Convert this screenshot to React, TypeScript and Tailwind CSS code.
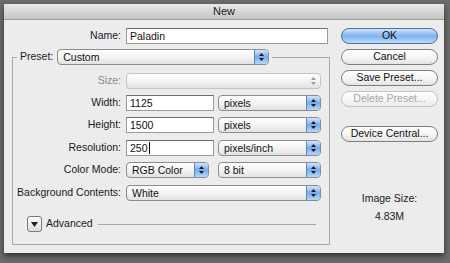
import React from "react";

const font = "font-['Lucida_Grande','Liberation_Sans',sans-serif]";

function Arrows({ dim }: { dim?: boolean }) {
  const c = dim ? "#9a9a9a" : "#1a1a1a";
  return (
    <svg width="7" height="10" viewBox="0 0 7 10">
      <path d="M3.5 1 L6 4 L1 4 Z" fill={c} />
      <path d="M3.5 9 L6 6 L1 6 Z" fill={c} />
    </svg>
  );
}

function Select({ value, w, disabled }: { value?: string; w: string; disabled?: boolean }) {
  return (
    <div
      className={`flex h-[16px] ${w} overflow-hidden rounded-[4px] border ${
        disabled ? "border-[#c4c4c4]" : "border-[#8c8c8c]"
      } bg-linear-to-b from-white via-[#f4f4f4] to-[#e2e2e2]`}
    >
      <div className="flex-1 truncate pl-[5px] leading-[14px] text-[#111]">{value}</div>
      {disabled ? (
        <div className="flex w-[14px] items-center justify-center">
          <Arrows dim />
        </div>
      ) : (
        <div className="flex w-[14px] items-center justify-center border-l border-[#5d86bf] bg-linear-to-b from-[#d3e5fb] via-[#78abec] to-[#b6d6fb]">
          <Arrows />
        </div>
      )}
    </div>
  );
}

function Input({ value, w, caret }: { value: string; w: string; caret?: boolean }) {
  return (
    <div
      className={`flex h-[16px] ${w} items-center border border-[#9a9a9a] border-t-[#6f6f6f] bg-white pl-[3px] leading-[14px] text-[#111]`}
    >
      {value}
      {caret && <span className="ml-[1px] inline-block h-[12px] w-px bg-black" />}
    </div>
  );
}

function Button({ label, primary, disabled }: { label: string; primary?: boolean; disabled?: boolean }) {
  const style = primary
    ? "border-[#4f6f9e] bg-linear-to-b from-[#d2e4fa] via-[#7fb2ef] to-[#bcdafb] text-[#111]"
    : disabled
      ? "border-[#c2c2c2] bg-linear-to-b from-white to-[#ececec] text-[#a8a8a8]"
      : "border-[#7e7e7e] bg-linear-to-b from-white via-[#f6f6f6] to-[#e4e4e4] text-[#111]";
  return (
    <div className={`flex h-[16px] w-[97px] items-center justify-center rounded-full border ${style}`}>
      {label}
    </div>
  );
}

function Row({ label, dim, className, children }: { label: string; dim?: boolean; className: string; children: React.ReactNode }) {
  return (
    <div className={`flex h-[16px] items-center ${className}`}>
      <div className={`w-[109px] pr-[1px] text-right ${dim ? "text-[#8a8a8a]" : "text-[#1a1a1a]"}`}>{label}</div>
      <div className="ml-[4px] flex gap-[4px]">{children}</div>
    </div>
  );
}

export default function App() {
  return (
    <div className={`h-[263px] w-[450px] overflow-hidden bg-[#6c6c6c] pl-[4px] pt-[4px] text-[10.5px] ${font}`}>
      <div className="h-[249px] w-[440px] bg-[#ececec] shadow-[0_3px_6px_rgba(0,0,0,0.55)]">
        {/* Title bar */}
        <div className="flex h-[16px] items-center justify-center border-b border-[#9c9c9c] bg-linear-to-b from-[#e9e9e9] to-[#c5c5c5] text-[11px] text-[#222]">
          New
        </div>

        <div className="flex">
          {/* Left column */}
          <div className="w-[337px] pl-[8px] pt-[8px]">
            <div className="flex h-[16px] items-center">
              <div className="w-[110px] pr-[1px] text-right text-[#1a1a1a]">Name:</div>
              <div className="ml-[4px]">
                <Input value="Paladin" w="w-[202px]" />
              </div>
            </div>

            <fieldset className="mt-[5px] w-[318px] border border-[#a9a9a9] pb-[12px]">
              <legend className="ml-[4px] flex items-center gap-[4px] px-[3px]">
                <span className="text-[#1a1a1a]">Preset:</span>
                <Select value="Custom" w="w-[212px]" />
              </legend>

              <Row label="Size:" dim className="mt-[8px]">
                <Select w="w-[195px]" disabled />
              </Row>
              <Row label="Width:" className="mt-[6px]">
                <Input value="1125" w="w-[88px]" />
                <Select value="pixels" w="w-[103px]" />
              </Row>
              <Row label="Height:" className="mt-[6px]">
                <Input value="1500" w="w-[88px]" />
                <Select value="pixels" w="w-[103px]" />
              </Row>
              <Row label="Resolution:" className="mt-[7px]">
                <Input value="250" w="w-[88px]" caret />
                <Select value="pixels/inch" w="w-[103px]" />
              </Row>
              <Row label="Color Mode:" className="mt-[6px]">
                <Select value="RGB Color" w="w-[83px]" />
                <div className="ml-[5px]">
                  <Select value="8 bit" w="w-[103px]" />
                </div>
              </Row>
              <Row label="Background Contents:" className="mt-[7px]">
                <Select value="White" w="w-[195px]" />
              </Row>

              <div className="ml-[14px] mt-[15px] flex h-[16px] items-center">
                <div className="flex h-[16px] w-[15px] items-center justify-center rounded-[3px] border border-[#7a7a7a] bg-linear-to-b from-white to-[#dcdcdc]">
                  <svg width="7" height="5" viewBox="0 0 7 5">
                    <path d="M0 0 H7 L3.5 5 Z" fill="#222" />
                  </svg>
                </div>
                <span className="ml-[4px] text-[#1a1a1a]">Advanced</span>
                <div className="ml-[5px] mr-[13px] h-px flex-1 bg-[#a9a9a9]" />
              </div>
            </fieldset>
          </div>

          {/* Right column */}
          <div className="flex flex-col pt-[8px]">
            <div className="flex flex-col gap-[5px]">
              <Button label="OK" primary />
              <Button label="Cancel" />
              <Button label="Save Preset..." />
              <Button label="Delete Preset..." disabled />
            </div>
            <div className="mt-[19px]">
              <Button label="Device Central..." />
            </div>
            <div className="mt-[47px] text-center leading-[18px] text-[#1a1a1a]">
              <div>Image Size:</div>
              <div>4.83M</div>
            </div>
          </div>
        </div>
      </div>
    </div>
  );
}
